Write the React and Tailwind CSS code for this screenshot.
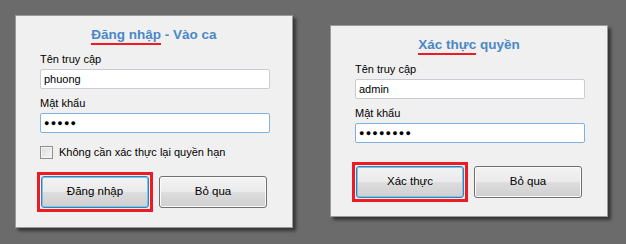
import React from 'react'

const font = { fontFamily: '"Liberation Sans", Arial, sans-serif' }

const Title = ({ underlined, rest }) => (
    <div className="flex justify-center pt-[11px] h-[33px]">
        <div className="text-[13.5px] font-bold text-[#4a88c6] leading-[16px] whitespace-pre">
            <span className="border-b-2 border-[#ed1c24] pb-[1px]">{underlined}</span>
            <span>{rest}</span>
        </div>
    </div>
)

const Field = ({ label, value, focused, password }) => (
    <div className="flex flex-col px-[24px]">
        <div className="h-[20px] flex items-center text-[11px] text-black">{label}</div>
        <div
            className={
                'h-[20px] w-[230px] bg-white rounded-[2px] border flex items-center pl-[3px] text-[11px] text-black ' +
                (focused ? 'border-[#7fb2e2]' : 'border-[#c9ccd2]')
            }
        >
            {password ? (
                <span className="text-[9px] tracking-[1.2px] leading-none">{value}</span>
            ) : (
                value
            )}
        </div>
    </div>
)

const Button = ({ children, focused }) => (
    <div
        className={
            'w-[108px] h-[32px] rounded-[3px] border flex items-center justify-center text-[11.5px] text-black bg-[linear-gradient(#f3f3f3_0%,#ebebeb_48%,#dddddd_52%,#cfcfcf_100%)] ' +
            (focused
                ? 'border-[#3c7fb1] shadow-[inset_0_0_0_1px_#6fc8f0]'
                : 'border-[#707070] shadow-[inset_0_0_0_1px_#fbfbfb]')
        }
    >
        {children}
    </div>
)

const Buttons = ({ primary }) => (
    <div className="flex items-center pl-[21px] gap-[6px]">
        <div className="border-[3px] border-[#ed1c24] p-px">
            <Button focused>{primary}</Button>
        </div>
        <Button>Bỏ qua</Button>
    </div>
)

const Panel = ({ children, className }) => (
    <div
        className={
            'w-[278px] bg-[#f0f0f0] border border-[#9a9a9a] shadow-[3px_3px_3px_rgba(0,0,0,0.5)] ' +
            className
        }
    >
        {children}
    </div>
)

const App = () => {
    return (
        <div className="w-[626px] h-[244px] bg-[#6b6b6b] flex items-start gap-[37px] pl-[15px]" style={font}>
            <Panel className="mt-[15px] h-[213px]">
                <Title underlined="Đăng nhập" rest=" - Vào ca" />
                <Field label="Tên truy cập" value="phuong" />
                <div className="h-[4px]" />
                <Field label="Mật khẩu" value="●●●●●" focused password />
                <div className="flex items-center gap-[6px] px-[24px] mt-[13px] h-[13px]">
                    <div className="w-[13px] h-[13px] border border-[#8e8f8f] bg-[linear-gradient(135deg,#dcdcdc,#f6f6f6)] shadow-[inset_0_0_0_1px_#f4f4f4]" />
                    <span className="text-[11px] text-black">Không cần xác thực lại quyền hạn</span>
                </div>
                <div className="h-[13px]" />
                <Buttons primary="Đăng nhập" />
            </Panel>
            <Panel className="mt-[25px] h-[192px]">
                <Title underlined="Xác thực" rest=" quyền" />
                <Field label="Tên truy cập" value="admin" />
                <div className="h-[4px]" />
                <Field label="Mật khẩu" value="●●●●●●●●" focused password />
                <div className="h-[19px]" />
                <Buttons primary="Xác thực" />
            </Panel>
        </div>
    )
}

export default App
